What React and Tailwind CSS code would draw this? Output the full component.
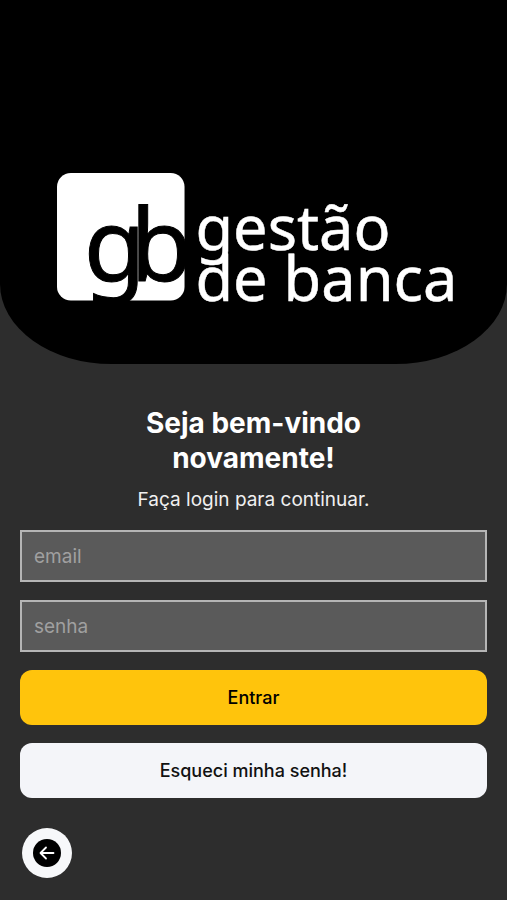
import { useState } from "react";

function Logo() {
  return (
    <svg
      viewBox="0 0 400 134"
      role="img"
      aria-label="gestão de banca"
      className="w-full overflow-visible font-['Noto_Sans','Open_Sans',sans-serif]"
    >
      <rect x="1" y="1" width="129" height="129" rx="14" fill="#fff" />
      <g fill="#000" stroke="#000" strokeWidth="1" fontSize="102">
        <text x="28" y="110">g</text>
        <text x="75" y="110">b</text>
      </g>
      <g fill="#fff" stroke="#fff" strokeWidth="0.5" fontSize="62">
        <text x="141" y="79">gestão</text>
        <text x="141" y="130">de banca</text>
      </g>
    </svg>
  );
}

function Field({ id, type, label, value, onChange, autoComplete }) {
  return (
    <div>
      <label htmlFor={id} className="sr-only">
        {label}
      </label>
      <input
        id={id}
        type={type}
        value={value}
        onChange={(e) => onChange(e.target.value)}
        placeholder={label}
        autoComplete={autoComplete}
        className="block h-13 w-full border-2 border-[#b5b5b5] bg-[#5a5a5a] px-3 text-[19px] text-white outline-none placeholder:text-[#a0a0a0] focus:border-white"
      />
    </div>
  );
}

export default function App() {
  const [email, setEmail] = useState("");
  const [senha, setSenha] = useState("");

  return (
    <main className="min-h-screen bg-[#2d2d2d] font-[Inter,'Liberation_Sans',sans-serif] text-white">
      {/* Header */}
      <header className="rounded-b-[22%] bg-black px-[11%] pt-43 pb-15">
        <Logo />
      </header>

      {/* Login */}
      <section className="px-5 pt-[42px]">
        <h1 className="mx-auto max-w-64 text-center text-[28px] leading-[35px] font-bold">
          Seja bem-vindo novamente!
        </h1>
        <p className="mt-[10px] text-center text-[19px] leading-7 text-[#f0f0f0]">
          Faça login para continuar.
        </p>

        <form onSubmit={(e) => e.preventDefault()} className="mt-4 flex flex-col gap-[18px]">
          <Field
            id="email"
            type="email"
            label="email"
            value={email}
            onChange={setEmail}
            autoComplete="email"
          />
          <Field
            id="senha"
            type="password"
            label="senha"
            value={senha}
            onChange={setSenha}
            autoComplete="current-password"
          />
          <button
            type="submit"
            className="h-[55px] w-full rounded-xl bg-[#ffc40c] text-lg font-medium text-black"
          >
            Entrar
          </button>
          <button
            type="button"
            className="h-[55px] w-full rounded-xl bg-[#f4f5f9] text-lg font-medium text-[#111111]"
          >
            Esqueci minha senha!
          </button>
        </form>
      </section>

      {/* Voltar */}
      <footer className="px-[22px] pt-[30px] pb-5">
        <button
          type="button"
          aria-label="Voltar"
          className="flex size-[50px] items-center justify-center rounded-full bg-[#f7f8fa]"
        >
          <svg viewBox="0 0 28 28" className="size-7" fill="none">
            <circle cx="14" cy="14" r="14" fill="#000" />
            <path
              d="M20.5 14H8M13 8.5L7.5 14L13 19.5"
              stroke="#fff"
              strokeWidth="1.8"
              strokeLinecap="round"
              strokeLinejoin="round"
            />
          </svg>
        </button>
      </footer>
    </main>
  );
}
